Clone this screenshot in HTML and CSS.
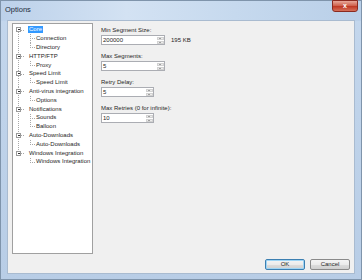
FILE: index.html
```html
<!DOCTYPE html>
<html lang="en">
<head>
    <meta charset="UTF-8">
    <title>Options</title>
    <link rel="stylesheet" href="styles.css">
</head>
<body>
    <div class="window">
        <div class="titlebar">
            <span class="title">Options</span>
            <span class="close">x</span>
        </div>
        <div class="client">
            <div class="main">
                <div class="tree">
                    <div class="grp">
                        <div class="row root"><span class="exp"></span><span class="txt sel">Core</span></div>
                        <div class="row kid"><span class="txt">Connection</span></div>
                        <div class="row kid last"><span class="txt">Directory</span></div>
                    </div>
                    <div class="grp">
                        <div class="row root"><span class="exp"></span><span class="txt">HTTP/FTP</span></div>
                        <div class="row kid last"><span class="txt">Proxy</span></div>
                    </div>
                    <div class="grp">
                        <div class="row root"><span class="exp"></span><span class="txt">Speed Limit</span></div>
                        <div class="row kid last"><span class="txt">Speed Limit</span></div>
                    </div>
                    <div class="grp">
                        <div class="row root"><span class="exp"></span><span class="txt">Anti-virus integration</span></div>
                        <div class="row kid last"><span class="txt">Options</span></div>
                    </div>
                    <div class="grp">
                        <div class="row root"><span class="exp"></span><span class="txt">Notifications</span></div>
                        <div class="row kid"><span class="txt">Sounds</span></div>
                        <div class="row kid last"><span class="txt">Balloon</span></div>
                    </div>
                    <div class="grp">
                        <div class="row root"><span class="exp"></span><span class="txt">Auto-Downloads</span></div>
                        <div class="row kid last"><span class="txt">Auto-Downloads</span></div>
                    </div>
                    <div class="grp">
                        <div class="row root"><span class="exp"></span><span class="txt">Windows Integration</span></div>
                        <div class="row kid last"><span class="txt">Windows Integration</span></div>
                    </div>
                </div>
                <div class="panel">
                    <div class="field">
                        <div class="lbl">Min Segment Size:</div>
                        <div class="line">
                            <div class="spin wide"><span class="val">200000</span><span class="arrows"><i class="up"></i><i class="down"></i></span></div>
                            <span class="unit">195 KB</span>
                        </div>
                    </div>
                    <div class="field">
                        <div class="lbl">Max Segments:</div>
                        <div class="line">
                            <div class="spin wide"><span class="val">5</span><span class="arrows"><i class="up"></i><i class="down"></i></span></div>
                        </div>
                    </div>
                    <div class="field">
                        <div class="lbl">Retry Delay:</div>
                        <div class="line">
                            <div class="spin"><span class="val">5</span><span class="arrows"><i class="up"></i><i class="down"></i></span></div>
                        </div>
                    </div>
                    <div class="field">
                        <div class="lbl">Max Retries (0 for infinite):</div>
                        <div class="line">
                            <div class="spin"><span class="val">10</span><span class="arrows"><i class="up"></i><i class="down"></i></span></div>
                        </div>
                    </div>
                </div>
            </div>
            <div class="buttons">
                <span class="btn def">OK</span>
                <span class="btn">Cancel</span>
            </div>
        </div>
    </div>
</body>
</html>
```
FILE: styles.css
```css
*{
    margin: 0;
    padding: 0;
    box-sizing: border-box;
}
body{
    background-color: #fff;
    font-family: "Liberation Sans", Arial, sans-serif;
    font-size: 6px;
    color: #262626;
}
.window{
    width: 362px;
    height: 280px;
    border: 1px solid #7f94ab;
    background: linear-gradient(to bottom, #c4d7ed, #bfd3ea 40%, #b8cde6);
    padding: 0 7px 6px 7px;
    display: flex;
    flex-direction: column;
}
.titlebar{
    height: 20px;
    margin: 0 -7px;
    padding: 0 3px 0 4px;
    display: flex;
    justify-content: space-between;
    align-items: flex-start;
    background: linear-gradient(to right, #bcd1ea, #d3e2f3 35%, #c6d9ee 65%, #b9cfe8);
}
.title{
    font-size: 7.5px;
    line-height: 17px;
    color: #1c2a3a;
}
.close{
    width: 26px;
    height: 12px;
    margin-top: -1px;
    border: 1px solid #8a2a20;
    border-radius: 0 0 3px 3px;
    background: linear-gradient(to bottom, #e8a89a, #d06450 45%, #c03a26 55%, #d5705a);
    color: #fff;
    font-weight: bold;
    font-size: 7px;
    line-height: 10px;
    text-align: center;
}
.client{
    flex: 1;
    background-color: #f0f0f0;
    box-shadow: 0 0 0 1px #a9bbd0;
    padding: 2px 4px 3px 4px;
    display: flex;
    flex-direction: column;
}
.main{
    display: flex;
    gap: 8px;
}
.tree{
    width: 81px;
    height: 231px;
    background-color: #fff;
    border: 1px solid #a0a0a0;
    padding-top: 1.6px;
}
.row{
    height: 8.8px;
    line-height: 8.8px;
    display: flex;
    align-items: center;
    white-space: nowrap;
}
.grp{
    background: repeating-linear-gradient(to bottom, #a8a8a8 0 1px, transparent 1px 2px) no-repeat 5px 0 / 1px 100%;
}
.grp:first-child{
    background-position: 5px 4.4px;
}
.grp:last-child{
    background-size: 1px 4.4px;
}
.root{
    padding-left: 3px;
    background: repeating-linear-gradient(to right, #a8a8a8 0 1px, transparent 1px 2px) no-repeat 8px 4px / 4px 1px;
}
.exp{
    width: 5px;
    height: 5px;
    border: 1px solid #9a9a9a;
    background-color: #fff;
    position: relative;
}
.exp::after{
    content: "";
    position: absolute;
    left: 0.5px;
    top: 1px;
    width: 2px;
    height: 1px;
    background-color: #333;
}
.root .txt{
    margin-left: 7px;
}
.txt{
    padding: 0 1px;
    line-height: 7px;
}
.sel{
    background-color: #3399ff;
    color: #fff;
}
.kid{
    padding-left: 22px;
    background:
        repeating-linear-gradient(to bottom, #a8a8a8 0 1px, transparent 1px 2px) no-repeat 17px 0 / 1px 100%,
        repeating-linear-gradient(to right, #a8a8a8 0 1px, transparent 1px 2px) no-repeat 17px 4px / 5px 1px;
}
.kid.last{
    background-size: 1px 4.4px, 5px 1px;
}
.panel{
    padding-top: 3px;
    display: flex;
    flex-direction: column;
    gap: 7px;
}
.lbl{
    height: 8px;
    line-height: 8px;
    margin-bottom: 1px;
}
.line{
    display: flex;
    align-items: center;
    gap: 6px;
}
.spin{
    width: 53px;
    height: 10px;
    border: 1px solid #abadb3;
    background-color: #fff;
    display: flex;
}
.spin.wide{
    width: 64px;
}
.val{
    flex: 1;
    padding-left: 1px;
    line-height: 8px;
}
.arrows{
    width: 8px;
    display: flex;
    flex-direction: column;
    gap: 0;
    padding: 0 0 0 0;
}
.arrows i{
    flex: 1;
    margin: 0.5px;
    border: 1px solid #d2d2d2;
    background-color: #ececec;
    position: relative;
}
.arrows i::after{
    content: "";
    position: absolute;
    left: 1px;
    top: 0;
    border-left: 1.5px solid transparent;
    border-right: 1.5px solid transparent;
}
.arrows .up::after{
    border-bottom: 1.5px solid #555;
}
.arrows .down::after{
    border-top: 1.5px solid #555;
}
.unit{
    line-height: 8px;
}
.buttons{
    margin-top: auto;
    display: flex;
    justify-content: flex-end;
    gap: 5px;
}
.btn{
    width: 40px;
    height: 11px;
    border: 1px solid #8a8a8a;
    border-radius: 2px;
    background: linear-gradient(to bottom, #f4f4f4, #ebebeb 50%, #dddddd 51%, #cfcfcf);
    text-align: center;
    line-height: 9px;
}
.btn.def{
    border-color: #3c7fb1;
    box-shadow: inset 0 0 0 1px #9fd5f5;
}
```
